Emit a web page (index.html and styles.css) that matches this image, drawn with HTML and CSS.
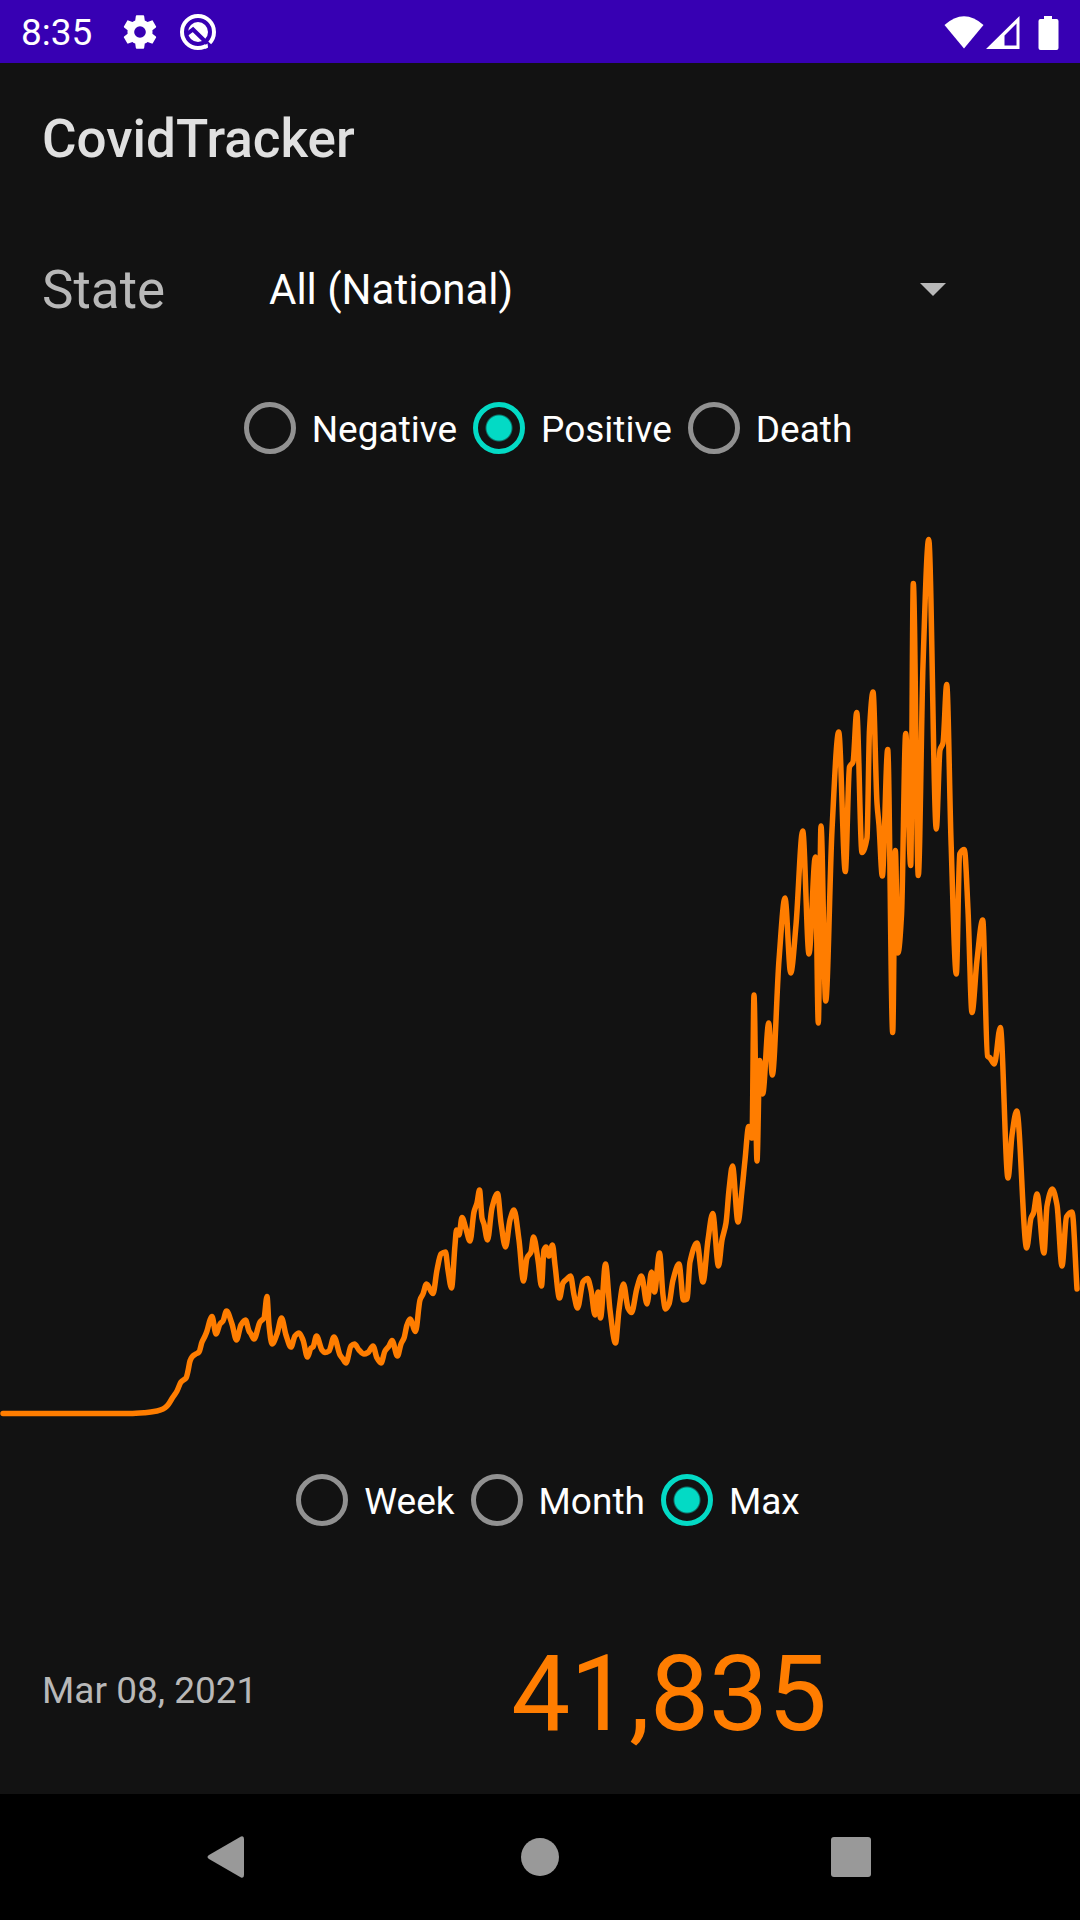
FILE: index.html
```html
<!DOCTYPE html>
<html lang="en">
<head>
<meta charset="utf-8">
<meta name="viewport" content="width=device-width, initial-scale=1">
<title>CovidTracker</title>
<link rel="stylesheet" href="styles.css">
</head>
<body>
<div class="status-bar">
  <div class="status-left">
    <span class="clock">8:35</span>
    <svg class="status-icon gear" viewBox="0 0 24 24" aria-hidden="true"><path d="M19.43 12.98c.04-.32.07-.64.07-.98s-.03-.66-.07-.98l2.11-1.65c.19-.15.24-.42.12-.64l-2-3.46c-.12-.22-.39-.3-.61-.22l-2.49 1c-.52-.4-1.08-.73-1.69-.98l-.38-2.65A.49.49 0 0 0 14 2h-4c-.25 0-.46.18-.49.42l-.38 2.65c-.61.25-1.17.59-1.69.98l-2.49-1c-.23-.09-.49 0-.61.22l-2 3.46c-.13.22-.07.49.12.64l2.11 1.65c-.04.32-.07.65-.07.98s.03.66.07.98l-2.11 1.65c-.19.15-.24.42-.12.64l2 3.46c.12.22.39.3.61.22l2.49-1c.52.4 1.08.73 1.69.98l.38 2.65c.03.24.24.42.49.42h4c.25 0 .46-.18.49-.42l.38-2.65c.61-.25 1.17-.59 1.69-.98l2.49 1c.23.09.49 0 .61-.22l2-3.46c.12-.22.07-.49-.12-.64l-2.11-1.65zM12 15.5A3.5 3.5 0 1 1 12 8.500a3.500 3.500 0 0 1 0 7z"/></svg>
    <svg class="status-icon" viewBox="0 0 40 40" aria-hidden="true">
      <circle class="ring" cx="20" cy="20" r="16"/>
      <circle cx="20" cy="20" r="10"/>
      <path class="slash" d="M9 22 15 17.500 34 36"/>
      <path d="M26 34 29.500 31.500 30 35.500 27.500 37z"/>
    </svg>
  </div>
  <svg class="status-right" viewBox="0 0 116 40" aria-hidden="true">
    <path d="M.5 13Q20-4.500 39.500 13L20 36.500z"/>
    <path fill-rule="evenodd" d="M42 37 75.500 4V37zM60.500 23.500V33.500H72.500V11.500z"/>
    <path d="M100 4h8v3h4.500q2 0 2 2v27q0 2-2 2h-16q-2 0-2-2V9q0-2 2-2h3.500z"/>
  </svg>
</div>

<header class="app-bar"><h1 class="app-title">CovidTracker</h1></header>

<main class="content">
  <div class="state-row">
    <label class="state-label" for="state">State</label>
    <div class="state-picker">
      <select id="state" class="state-select"><option>All (National)</option></select>
      <svg class="caret" viewBox="0 0 26 13" aria-hidden="true"><path d="M0 0h26L13 13z"/></svg>
    </div>
  </div>

  <div class="radio-row" role="radiogroup" aria-label="Metric">
    <label class="choice"><input class="radio" type="radio" name="metric"><span class="choice-text">Negative</span></label>
    <label class="choice"><input class="radio" type="radio" name="metric" checked><span class="choice-text">Positive</span></label>
    <label class="choice"><input class="radio" type="radio" name="metric"><span class="choice-text">Death</span></label>
  </div>

  <svg class="chart" viewBox="0 486 1080 956" role="img" aria-label="Daily increase in positive cases"><path id="line" class="chart-line"/></svg>

  <div class="radio-row" role="radiogroup" aria-label="Time scale">
    <label class="choice"><input class="radio" type="radio" name="scale"><span class="choice-text">Week</span></label>
    <label class="choice"><input class="radio" type="radio" name="scale"><span class="choice-text">Month</span></label>
    <label class="choice"><input class="radio" type="radio" name="scale" checked><span class="choice-text">Max</span></label>
  </div>

  <div class="reading">
    <time class="date" datetime="2021-03-08">Mar 08, 2021</time>
    <output class="count">41,835</output>
  </div>
</main>

<nav class="nav-bar" aria-label="System">
  <button class="nav-button" type="button" aria-label="Back"><svg class="nav-icon" viewBox="0 0 48 48"><path d="M4 22 36 3.500Q39 2.500 39 6V42Q39 45.500 36 44.500L4 26Q1 24 4 22z"/></svg></button>
  <button class="nav-button" type="button" aria-label="Home"><svg class="nav-icon" viewBox="0 0 48 48"><circle cx="24" cy="24" r="19"/></svg></button>
  <button class="nav-button" type="button" aria-label="Recent apps"><svg class="nav-icon" viewBox="0 0 48 48"><rect x="4" y="4" width="40" height="40" rx="3"/></svg></button>
</nav>
<script src="chart.js"></script>
</body>
</html>
```

FILE: styles.css
```css
* { box-sizing: border-box; }

body {
  margin: 0;
  min-height: 100vh;
  display: flex;
  flex-direction: column;
  background: #121212;
  color: #fff;
  font-family: Roboto, "Liberation Sans", sans-serif;
  font-size: 37px;
}

.status-bar {
  height: 63px;
  padding: 0 20px 0 21px;
  display: flex;
  align-items: center;
  justify-content: space-between;
  background: #3700b3;
}

.status-left { display: flex; align-items: center; gap: 28px; }
.clock { line-height: 60px; padding-top: 3px; }
.status-icon { width: 40px; height: 40px; fill: #fff; }
.gear { margin-right: -10px; }
.ring { fill: none; stroke: #fff; stroke-width: 4; }
.slash { fill: none; stroke: #3700b3; stroke-width: 4; }
.status-right { width: 116px; height: 40px; fill: #fff; }

.app-bar {
  height: 147px;
  padding: 4px 42px 0;
  display: flex;
  align-items: center;
}

.app-title {
  margin: 0;
  font-size: 53px;
  font-weight: 500;
  color: #e0e0e0;
}

.content { flex: 1; display: flex; flex-direction: column; }

.state-row {
  height: 160px;
  padding: 0 126px 0 42px;
  display: flex;
  align-items: center;
}

.state-label { width: 227px; font-size: 53px; color: #b8b8b8; }

.state-picker { flex: 1; display: grid; align-items: center; padding-bottom: 2px; }

.state-select {
  grid-area: 1 / 1;
  width: 100%;
  height: 63px;
  padding: 0;
  border: 0;
  background: none;
  appearance: none;
  color: #fff;
  font: inherit;
  font-size: 42px;
}

.state-select option { background: #424242; }

.caret {
  grid-area: 1 / 1;
  justify-self: end;
  width: 26px;
  height: 13px;
  margin-right: 8px;
  fill: #b8b8b8;
  pointer-events: none;
}

.radio-row {
  height: 116px;
  display: flex;
  align-items: center;
  justify-content: center;
}

.choice { display: flex; align-items: center; }
.choice-text { padding-top: 2px; }

.radio {
  appearance: none;
  width: 52px;
  height: 52px;
  margin: 0 16px;
  border: 5px solid #919191;
  border-radius: 50%;
}

.radio:checked {
  border-color: #03dac5;
  background: radial-gradient(circle, #03dac5 12px, transparent 14px);
}

.chart { display: block; width: 100%; }

.chart-line {
  fill: none;
  stroke: #ff7d00;
  stroke-width: 5.5;
  stroke-linecap: round;
  stroke-linejoin: round;
}

.reading {
  flex: 1;
  padding: 36px 42px 0;
  display: flex;
  align-items: center;
}

.date { width: 43%; padding-bottom: 8px; color: #b8b8b8; }
.count { flex: 1; padding-left: 41px; font-size: 105px; color: #ff7d00; }

.nav-bar {
  height: 126px;
  display: flex;
  justify-content: center;
  background: #000;
}

.nav-button {
  width: 311px;
  padding: 0;
  border: 0;
  background: none;
  display: flex;
  align-items: center;
  justify-content: center;
}

.nav-icon { width: 48px; height: 48px; fill: #999; }
```

FILE: chart.js
```js
// Points of the daily series, x and y in chart units.
const points = `3,1413.500 130,1413.500 145,1412.700 157,1411 163,1409 167,1406 173,1397 177,1391 181,1382 183,1380.300 186,1378 188,1371 190,1361 192,1357 195,1354.500 199,1352 202,1342 205,1336 207,1331 210,1320 212,1316.500 216,1334 220,1324 223,1321 226.500,1311 232,1324 236.500,1340 241,1325 245.500,1320 249,1331 251,1334 254,1339 260,1322 262,1320 264,1318 267,1296.500 269,1325 272,1344 277,1334 281.500,1318 286,1335 291,1347 295,1336 299,1333 303,1340 307.500,1357 311,1348 313,1347 316.500,1336 322,1350 325,1352.500 329,1351 334,1337 340,1355 343,1359 346,1363 351,1346 354.500,1344 359,1350 364,1354 368,1352.500 373,1346 377,1358 381,1363 385,1351 389,1346 392,1340.500
397.500,1356 401,1344 404,1338 407,1325 410,1319 415.500,1331.500 420,1300 423,1294 426.500,1284 433,1293.500 437,1270 441,1254 445.500,1252 448,1270 451.500,1288 455,1245 456.500,1230 459,1235 462,1217.500 466,1229 470,1241 474,1212 477,1203 479.500,1190 482,1218 484,1224 487.500,1240 492,1208 497.500,1193.500 501,1223 505.500,1247 510,1220 514,1210 519,1240 523.500,1281 527,1258 531,1252 533.500,1237 538,1260 541.500,1286 544,1250 546,1247 549,1256 552.500,1245 555,1265 559.500,1298 563,1283 567,1279 570.500,1276 574,1295 577.500,1308 583,1282 587.500,1278.500 591,1290 595,1315 598,1292 600.500,1318 605.500,1264 610,1310 615.500,1343 619,1310 623.500,1284 628,1308 631.500,1312.500 637,1288 641.500,1276 647,1304 651.500,1272 654.500,1292 659.500,1253 663,1295 665.500,1309 669,1304 673,1280 679,1264 683.500,1300 687,1299 690,1262 697,1243 703,1282 708,1240 712.700,1213.500 718.500,1266 722,1240 726,1223 729,1190 732.500,1166
738,1222 742,1190 745,1160 748.700,1126.500 752,1138 754,995 757,1161 759.700,1060.500 762.700,1094 768.700,1023 772.300,1075 779,960 785,898 790.700,973 796,925 802.700,831 809,954 815.300,857 818.300,1023 821,826 825.700,1001 832,830 838.700,732 845.300,871.500 849.500,767 853,762 856.700,712.500 862,852.500 867,838 869.500,730 873,692 877,803 879,825 882.300,876 887.700,749.500 892.700,1032.500 895.300,850.500 898,953 901.500,915 905.700,733.500 910.700,865.500 913.300,583.500 918.300,875.500 923,665 928.700,539.500 936.300,829 940,750 943,743 946.700,684.500 951,840 956.300,974 959.700,854 964.300,849.500 968,910 972,1012.500 977,960 982.700,920 987.500,1056 990,1058 994.300,1064 1000.300,1027.500 1008,1178 1012,1135 1016.700,1111 1026.700,1248 1031,1218 1033.500,1213 1037,1194 1044,1253 1047,1206 1052.300,1189 1057,1205 1062,1266 1066.500,1217 1072,1212 1077,1289`
  .split(/\s+/).map(p => p.split(",").map(Number));

// Smooth monotone curve: slopes vanish at every peak and trough.
const slope = i => (points[i + 1][1] - points[i][1]) / (points[i + 1][0] - points[i][0]);
const tangents = points.map((_, i) => {
  if (i === 0) return slope(0);
  if (i === points.length - 1) return slope(i - 1);
  const a = slope(i - 1), b = slope(i);
  return a * b <= 0 ? 0 : 2 * a * b / (a + b);
});

let d = `M${points[0]}`;
for (let i = 0; i < points.length - 1; i++) {
  const [x0, y0] = points[i], [x1, y1] = points[i + 1], h = (x1 - x0) / 3;
  d += `C${x0 + h},${y0 + tangents[i] * h} ${x1 - h},${y1 - tangents[i + 1] * h} ${x1},${y1}`;
}
document.getElementById("line").setAttribute("d", d);
```
